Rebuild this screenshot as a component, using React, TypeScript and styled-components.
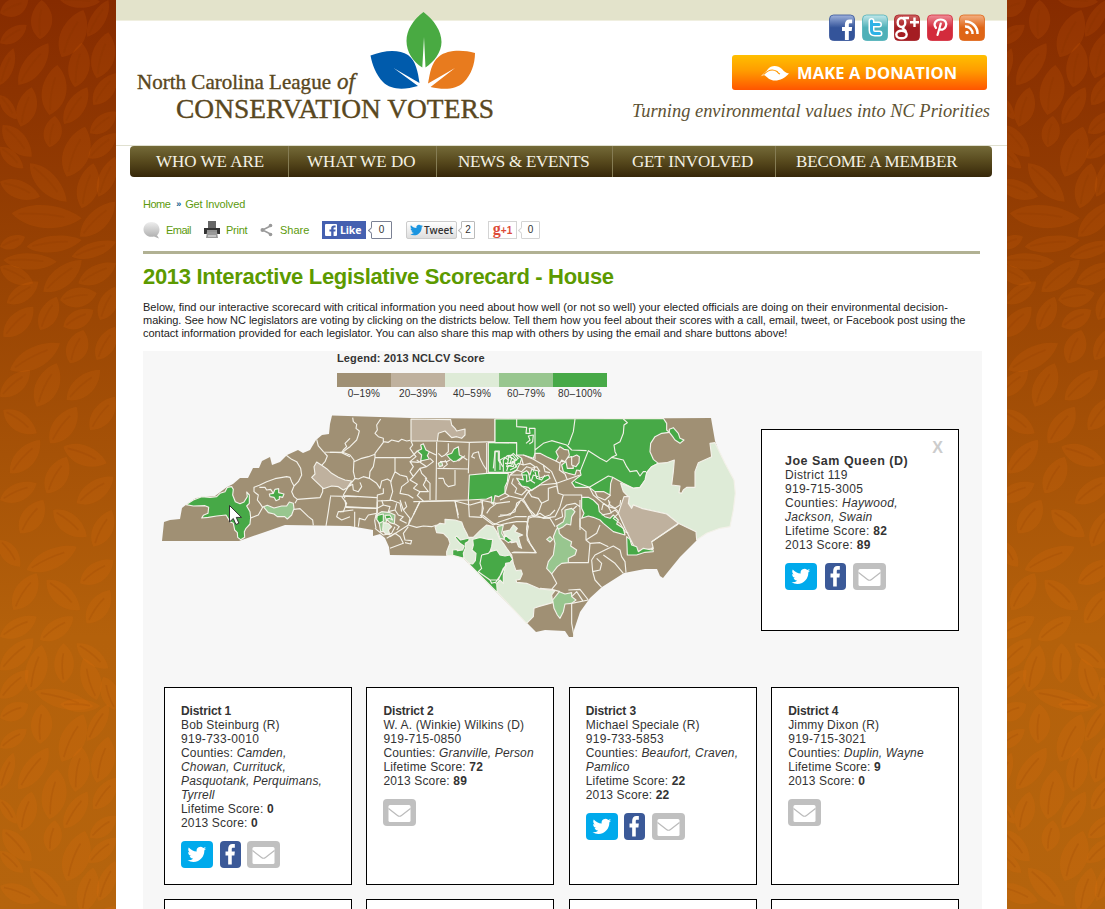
import React from 'react';
import styled, { createGlobalStyle } from 'styled-components';

const Global = createGlobalStyle`
  * { box-sizing: border-box; }
  html, body { margin: 0; padding: 0; }
  body { font-family: "Liberation Sans", Arial, sans-serif; color: #333; background: #b4620c; }
  a { color: #5c9a0c; text-decoration: none; }
`;

const Page = styled.div`
  display: grid;
  grid-template-columns: 116px 891px 98px;
  height: 909px;
  overflow: hidden;
`;
const Side = styled.svg`
  display: block;
  height: 909px;
  width: 100%;
`;
const Main = styled.main`
  background: #fff;
  min-width: 0;
`;
const Header = styled.header`
  height: 146px;
  display: flex;
  justify-content: space-between;
  padding: 0 15px 0 14px;
  border-bottom: 1px solid #e0e0d0;
  background: linear-gradient(#e3e3cb 20px, #f0efe0 20px, #f0efe0 21px, #fff 21px);
`;
const Brand = styled.svg`
  display: block;
`;
const HeaderRight = styled.div`
  display: flex;
  flex-direction: column;
  align-items: flex-end;
  width: 380px;
`;
const Socials = styled.div`
  display: flex;
  gap: 6.5px;
  padding: 14px 7px 0 0;
`;
const SocialBadge = styled.svg`
  display: block;
  width: 26px;
  height: 27px;
`;
const Donate = styled.a`
  width: 255px;
  height: 35px;
  margin: 14px 5px 0 0;
  border-radius: 3px;
  background: linear-gradient(#ffbf00, #ff9c00 45%, #ff5500);
  display: flex;
  align-items: center;
  padding-left: 28px;
  gap: 7px;
  color: #fff;
  font: bold 16.5px/35px "Open Sans", sans-serif;
  letter-spacing: 0.1px;
  white-space: nowrap;
`;
const Tagline = styled.svg`
  display: block;
  margin-top: 4px;
`;
const Nav = styled.nav`
  display: grid;
  grid-template-columns: 158px 148px 176px 163px 217px;
  width: 862px;
  height: 31px;
  margin-left: 14px;
  border-radius: 4px;
  background: linear-gradient(#746a38, #57491d 50%, #362709);
  overflow: hidden;
`;
const NavItem = styled.a<{ $pad: number; $track: number }>`
  padding-left: ${(p) => p.$pad}px;
  color: #f4f1e4;
  font: 17px/31px "Liberation Serif", serif;
  letter-spacing: ${(p) => p.$track}px;
  white-space: nowrap;
  & + & { border-left: 1px solid #857c54; }
`;
const Body = styled.section`
  padding: 20px 24px 0 27px;
`;
const Crumbs = styled.div`
  display: flex;
  gap: 4px;
  height: 14px;
  font-size: 11px;
  line-height: 14px;
  letter-spacing: -0.15px;
  a:first-child { letter-spacing: -0.5px; margin-right: 2px; }
  b { color: #0c5c8e; font-size: 9px; line-height: 15px; }
`;
const ShareBar = styled.div`
  display: flex;
  align-items: center;
  height: 22px;
  margin-top: 8px;
  font-size: 11px;
`;
const ShareLink = styled.a<{ $w: number; $track: number }>`
  display: flex;
  align-items: center;
  gap: 5px;
  width: ${(p) => p.$w}px;
  letter-spacing: ${(p) => p.$track}px;
  white-space: nowrap;
`;
const Like = styled.span`
  display: flex;
  align-items: center;
  gap: 3px;
  width: 44px;
  height: 18px;
  padding-left: 3px;
  background: #4560b0;
  color: #fff;
  font: bold 10.5px "Open Sans", sans-serif;
  letter-spacing: -0.15px;
`;
const Tweet = styled.span`
  display: flex;
  align-items: center;
  gap: 1px;
  width: 51px;
  height: 18px;
  margin-left: 14px;
  padding-left: 3px;
  border: 1px solid #ccc;
  border-radius: 2px;
  background: linear-gradient(#fff, #dedede);
  color: #333;
  font: 600 10px "Open Sans", sans-serif;
  letter-spacing: -0.05px;
`;
const Plus = styled.span`
  width: 29px;
  height: 18px;
  margin-left: 13px;
  border: 1px solid #d4d4d4;
  color: #dd4b39;
  text-align: center;
  font: bold 10px/16px "Liberation Sans", sans-serif;
  b { font: bold 16px/14px "Liberation Serif", serif; }
`;
const Count = styled.span<{ $w: number; $c: string; $gap: number }>`
  position: relative;
  width: ${(p) => p.$w}px;
  height: 18px;
  margin-left: ${(p) => p.$gap}px;
  border: 1px solid ${(p) => p.$c};
  border-radius: 1px;
  font-size: 10px;
  line-height: 16px;
  text-align: center;
  &::before {
    content: "";
    position: absolute;
    left: -3px;
    top: 6px;
    width: 4px;
    height: 4px;
    background: #fff;
    border-left: 1px solid ${(p) => p.$c};
    border-bottom: 1px solid ${(p) => p.$c};
    transform: rotate(45deg);
  }
`;
const Rule = styled.div`
  width: 837px;
  height: 3px;
  margin-top: 10px;
  background: #b1b193;
`;
const Title = styled.h1`
  margin: 10px 0 0;
  font-size: 22px;
  line-height: 26px;
  letter-spacing: -0.32px;
  color: #5c9a00;
  white-space: nowrap;
`;
const Intro = styled.p`
  margin: 11px 0 0;
  font-size: 11px;
  line-height: 13px;
  color: #222;
  white-space: nowrap;
`;
const Line = styled.span<{ $track: number }>`
  display: block;
  letter-spacing: ${(p) => p.$track}px;
`;
const Panel = styled.div`
  width: 839px;
  margin-top: 11px;
  background: #f7f7f7;
  padding-top: 1px;
`;
const Legend = styled.div`
  width: 270px;
  margin-left: 194px;
`;
const LegendTitle = styled.div`
  font-weight: bold;
  font-size: 11px;
  line-height: 13px;
  letter-spacing: 0.12px;
`;
const Scale = styled.div`
  display: grid;
  grid-template-columns: repeat(5, 54px);
  margin-top: 8px;
`;
const Step = styled.div<{ $c: string }>`
  border-top: 14px solid ${(p) => p.$c};
  text-align: center;
  font-size: 10px;
  line-height: 13px;
  letter-spacing: 0.25px;
`;
const MapRow = styled.div`
  display: flex;
  height: 287px;
`;
const MapSvg = styled.svg`
  display: block;
  flex: none;
`;
const Popup = styled.aside`
  position: relative;
  width: 198px;
  height: 202px;
  margin: 29px 0 0 18px;
  padding: 24px 23px 0;
  border: 1px solid #000;
  background: #fff;
  font-size: 12px;
  line-height: 14px;
  letter-spacing: 0.3px;
`;
const PopupName = styled.div`
  font-weight: bold;
  font-size: 12.5px;
  letter-spacing: 0.5px;
`;
const Close = styled.button`
  position: absolute;
  top: 9px;
  right: 15px;
  padding: 0;
  border: 0;
  background: none;
  color: #ccc;
  font: bold 16px/18px "Liberation Sans", sans-serif;
`;
const Cards = styled.div`
  display: grid;
  grid-template-columns: 188px 188px 188px 188px;
  column-gap: 14.4px;
  row-gap: 14px;
  margin-left: 21px;
`;
const Card = styled.article`
  height: 198px;
  padding: 16px 0 0 16px;
  border: 1px solid #000;
  background: #fff;
  font-size: 12px;
  line-height: 14px;
  letter-spacing: 0.16px;
  white-space: nowrap;
`;
const Phone = styled.div`
  letter-spacing: 0.28px;
`;
const Strong = styled.div`
  font-weight: bold;
  letter-spacing: -0.12px;
`;
const Actions = styled.div<{ $wide?: boolean }>`
  display: flex;
  gap: ${(p) => (p.$wide ? 7.5 : 6.5)}px;
  margin-top: 11px;
`;

/* Leaf wallpaper: base x, base y, tip x, tip y, width; units are a third of a pixel */
const leaves: number[][] = [
  [120,118,125,0,65],[185,172,250,30,75],[0,40,85,0,55],[0,130,80,75,45],[262,110,325,0,45],[180,0,300,5,40],
  [290,235,325,97,70],[225,262,245,128,65],[55,255,145,130,60],[0,255,40,145,40],[148,345,172,195,75],
  [192,372,262,262,55],[62,380,95,262,60],[280,315,348,220,55],[0,285,50,358,35],[148,442,165,348,55],
  [8,375,95,470,60],[270,400,348,335,50],[200,530,255,380,80],[265,475,348,400,50],[0,440,70,505,40],
  [90,490,200,605,60],[245,625,280,490,65],[295,590,345,470,50],[0,545,120,590,55],[35,640,245,655,70],
  [240,710,345,605,60],[80,740,245,720,50],[10,780,170,785,50],[215,770,348,725,45],[0,740,75,710,40],
  [235,850,348,790,55],[130,875,245,780,60],[0,800,100,850,50],[20,910,115,845,50],[180,900,290,880,60],
  [300,960,345,860,55],[120,990,170,890,55],[10,1010,100,920,60],[190,980,280,930,55],[210,1090,250,990,65],
  [290,1080,345,980,55],[30,1110,180,1030,65],[0,1190,90,1110,55],[110,1220,170,1090,70],[200,1200,300,1110,60],
  [270,1290,345,1190,60],[10,1230,110,1300,55],[150,1330,230,1220,65],[30,1420,120,1320,60],[190,1340,320,1390,60],
  [140,1480,200,1370,65],[0,1500,110,1450,55],[230,1510,340,1430,60],[60,1600,130,1500,65],[160,1530,260,1610,60],
  [280,1640,335,1530,60],[0,1620,60,1700,50],[80,1710,230,1640,60],[240,1750,340,1680,60],[40,1830,110,1720,65],
  [140,1740,240,1830,60],[260,1870,330,1770,60],[0,1910,110,1850,55],[120,1920,220,1850,55],
  [90,2075,125,1935,65],[0,2010,100,1915,60],[190,2050,190,1930,60],[230,1930,325,2005,50],[290,2100,250,1975,60],
  [105,2075,280,2120,55],[0,2095,85,2010,55],[345,2130,310,2030,55],
];
const TILE = 2113;

const leafPath = ([x1, y1, x2, y2, w]: number[]) => {
  const dx = x2 - x1, dy = y2 - y1, len = Math.hypot(dx, dy) || 1;
  const nx = (-dy / len) * w * 0.74, ny = (dx / len) * w * 0.74;
  const p = (t: number, s: number) => `${x1 + dx * t + nx * s},${y1 + dy * t + ny * s}`;
  return `M${x1},${y1} C${p(0.25, 1)} ${p(0.75, 0.9)} ${x2},${y2} C${p(0.8, -0.6)} ${p(0.3, -1)} ${x1},${y1}Z`;
};
const veinPath = ([x1, y1, x2, y2, w]: number[]) => {
  const dx = x2 - x1, dy = y2 - y1, len = Math.hypot(dx, dy) || 1;
  const nx = (-dy / len) * w * 0.12, ny = (dx / len) * w * 0.12;
  return `M${x1 + dx * 0.1},${y1 + dy * 0.1} Q${x1 + dx * 0.45 - nx},${y1 + dy * 0.45 - ny} ${x1 + dx * 0.75},${y1 + dy * 0.75}`;
};

const Foliage = ({ id, width, shift }: { id: string; width: number; shift: number }) => (
  <Side viewBox={`0 0 ${width} 909`} preserveAspectRatio="none">
    <defs>
      <linearGradient id={id} x1="0" y1="0" x2="0" y2="1">
        <stop offset="0" stopColor="#862b00" />
        <stop offset=".3" stopColor="#984303" />
        <stop offset=".7" stopColor="#b4610b" />
        <stop offset="1" stopColor="#b5640d" />
      </linearGradient>
    </defs>
    <rect width={width} height="909" fill={`url(#${id})`} />
    {[0, TILE].map((dy) => (
      <g key={dy} transform={`translate(${shift} 0) scale(.33333) translate(0 ${dy})`}>
        {leaves.map((l, i) => (
          <g key={i}>
            <path d={leafPath(l)} fill="#ff7a14" fillOpacity=".115" />
            <path d={veinPath(l)} fill="none" stroke="#7a3000" strokeOpacity=".12" strokeWidth="5" />
          </g>
        ))}
      </g>
    ))}
  </Side>
);

const BROWN = '#a09074', TAN = '#bfb19e', PALE = '#deebd7', MID = '#98c68f', GREEN = '#47a947';

type Layer = { at: [number, number]; fills: [string, string][]; lines: string };

/* Each layer is drawn at three units to the pixel from its own origin */
const layers: Layer[] = [
  {
    at: [150, 400],
    fills: [
      [GREEN, '108,314 130,300 155,290 180,292 200,290 210,280 225,275 232,262 245,260 250,268 248,285 256,305 270,311 282,306 292,290 290,276 298,285 298,310 290,318 300,335 302,352 300,372 288,385 283,395 284,412 272,419 263,412 262,398 254,390 250,370 240,365 228,345 200,348 175,352 155,354 160,346 174,340 176,322 165,317 130,318'],
      [GREEN, '358,282 370,280 375,268 386,266 386,278 402,282 398,292 388,290 388,298 378,302 372,292 360,290'],
      [MID, '340,320 352,316 372,324 395,318 410,318 418,306 430,310 432,326 425,345 412,357 404,350 382,350 372,342 355,338'],
      [TAN, '500,186 515,196 530,206 545,220 565,232 585,240 605,243 592,263 580,270 565,260 545,258 520,266 510,256 495,242 485,232 495,222 492,200'],
    ],
    lines: 'M500,118L505,138 520,155 532,168 525,185 515,196M520,156L575,158 600,170M600,115L585,130 590,140 580,150 575,158M408,165L425,178 440,185 452,205 455,225 445,245 432,258 425,245 420,232 410,230 375,236 350,245 328,256 312,262 312,275 325,285 322,300 330,310 338,322 325,345 300,355M432,258L425,275 432,290 442,298 435,310M442,298L470,296 510,293 518,275 518,262M432,328L450,326 475,350 488,360 490,376M540,288L620,290M542,288L535,335 528,378M328,262L345,262 350,270 362,268 370,280M575,290L590,310 580,335 565,335 560,350 575,360 600,350',
  },
  {
    at: [330, 345],
    fills: [
      [TAN, '243,222 362,224 365,240 375,250 380,258 405,252 405,270 395,280 380,275 365,278 345,258 325,265 322,288 243,288'],
      [GREEN, '262,318 275,312 272,300 280,296 288,315 298,320 292,332 298,342 285,345 272,348 275,330'],
      [GREEN, '365,325 372,312 385,305 388,330 398,335 380,348 370,350 360,342 350,330'],
      [MID, '325,355 335,350 338,362 328,365'],
      [GREEN, '475,292 560,294 560,330 575,340 570,355 560,375 545,382 475,382'],
      [GREEN, '418,390 470,385 535,385 532,410 525,425 525,445 505,455 495,452 490,478 485,475 485,455 470,462 415,465'],
    ],
    lines: 'M68,218L70,230 80,238 78,250 88,258 85,270 80,285 60,305 50,312 38,322 0,322M152,222L140,240 142,255 135,265 145,275 160,280 160,292 135,325 135,338M160,290L175,292 185,285 205,290 215,283 230,288 240,286M243,288L248,300 240,310 250,325M322,288L418,292M38,322L60,330 72,345 70,380 75,400M72,350L95,340 115,335 135,328M135,338L240,338 250,330 262,318M135,338L130,365 120,380 118,400 100,395 85,402 75,400 55,425 40,450 45,460M195,338L195,380 210,390 230,395 235,410 215,425 210,445 235,450 250,460M195,380L182,410 188,440 180,465M118,400L140,415 150,430 155,408 172,402 185,410M40,452L140,458M45,485L140,490M140,510L142,450 160,445 160,430M320,290L318,465M418,292L415,385M322,370L415,372M325,400L340,400 345,415 355,425 375,420 375,375M250,470L415,465M270,468L250,510M375,468L385,510M495,222L495,290 418,292M470,294L470,385M430,325L445,320 450,340 460,360 470,375M430,325L425,335 435,340M300,340L310,350 290,365 270,370 275,385 290,400 280,420 295,440 270,440 250,430M240,350L265,352 275,348M298,320L318,330M355,295L355,320 345,330M330,350L350,350 360,345M385,348L405,332M455,510L460,490 455,470M495,378L495,318 508,318 508,345 518,365M520,380L520,345 532,332 545,340 540,355 555,350 550,365 535,362 530,378M532,332L548,330 560,345 545,350M142,468L185,466 210,475 215,500M250,325L258,335 240,350 250,365 240,380 250,395 270,370M260,345L290,365M285,400L300,415 300,465M375,468L420,480 455,470M250,395L240,405 262,418 250,430M270,440L262,452 280,468M55,425L68,418 70,435 85,440 95,425 90,412M345,330L335,335 325,325M345,345L352,358 340,368M398,335L412,345',
  },
  {
    at: [340, 500],
    fills: [
      [PALE, '285,80 300,70 315,72 315,58 345,60 365,66 372,85 380,100 385,112 400,112 420,92 440,75 460,80 470,95 478,115 490,130 500,145 515,165 520,190 528,212 543,210 547,222 540,238 528,240 530,247 560,250 600,267 630,270 645,272 635,285 638,308 595,320 582,325 580,350 560,370 475,280 365,168 320,166 320,155 330,130 325,115 310,100 290,98'],
      [GREEN, '338,166 338,150 352,148 352,152 368,150 372,138 360,130 345,112 350,108 362,120 388,114 386,124 376,130 376,145 370,160 372,175'],
      [GREEN, '472,278 385,190 398,192 406,182 408,160 396,150 400,135 398,118 420,112 445,118 458,118 455,140 450,155 470,150 480,165 495,168 510,165 518,178 510,188 497,190 495,205 490,225 490,250 480,240 470,250'],
      [MID, '108,45 125,35 150,38 165,45 163,72 150,68 140,58 132,95 122,95 118,72'],
      [GREEN, '112,46 130,42 130,64 118,70 110,58'],
      [GREEN, '135,46 150,45 158,60 148,55 138,58'],
      [PALE, '130,68 145,70 155,80 145,90 150,105 135,100 128,90'],
      [MID, '472,80 490,75 485,100 495,118 480,115 475,100'],
      [PALE, '490,95 510,90 520,75 532,85 525,95 548,105 535,110 540,130 545,145 536,140 530,125 515,128 495,115'],
      [GREEN, '496,105 508,116 518,120 505,128 492,118'],
    ],
    lines: 'M15,0L18,22 112,25M44,35L44,82M0,35L40,30M55,80L58,55 75,60 85,45 110,40M180,0L190,30 210,55 205,75 190,85M240,5L205,75 230,82 250,78 275,80 290,75M190,85L150,110M140,115L165,100 180,110 190,130 150,145M205,80L190,100 195,120 215,122 212,132 195,128M240,5L345,2 355,55M385,0L388,50 425,52 428,0M428,45L460,70M475,50L500,45 525,35 530,10 545,0M460,70L480,75 500,70 530,65 560,65 565,80 560,105 570,130 588,158 520,156M425,165L420,190 425,205 415,215 450,240 475,240 490,205 500,195M425,165L445,160 455,150M465,250L485,220 495,200M450,240L455,250 470,245M112,5L112,40M112,25L130,15 150,20 145,35 165,30 175,45 190,50 180,60 200,70M130,15L125,0M165,30L170,10M105,85L130,105 155,100 165,80M165,72L178,80 170,90M108,45L104,62 108,85M190,30L200,20 195,5',
  },
  {
    at: [480, 400],
    fills: [
      [GREEN, '45,57 550,55 560,70 560,90 568,97 545,100 525,110 512,130 510,155 520,178 535,190 515,200 500,218 498,238 480,262 460,265 430,250 398,232 392,250 390,285 372,275 345,275 328,262 285,262 275,248 290,235 303,225 300,212 290,210 285,225 265,220 250,215 245,195 258,185 262,205 280,205 275,170 265,172 250,185 228,183 200,170 180,160 165,160 160,175 130,165 110,165 110,128 45,128'],
      [BROWN, '228,183 235,170 228,155 240,140 252,148 265,150 268,165 255,185 245,180 240,190'],
      [BROWN, '275,172 290,165 298,170 297,188 288,200 275,195'],
      [GREEN, '110,235 130,240 125,220 140,212 150,225 155,208 175,213 178,235 205,225 210,235 185,250 155,272 145,262 125,258'],
      [PALE, '705,128 690,130 695,170 655,188 645,215 645,262 620,262 610,270 605,280 597,278 600,258 575,255 580,215 583,180 560,188 535,190 515,200 500,218 495,240 480,262 460,265 422,250 430,275 445,290 445,310 455,325 460,315 485,325 560,342 595,370 648,395 650,420 680,400 720,385 750,380 760,330 766,280 762,240 735,190'],
      [TAN, '432,290 448,290 445,310 455,325 460,315 485,325 560,342 595,370 515,425 520,445 495,450 470,455 460,435 445,405 435,385 415,340 425,310'],
      [GREEN, '568,88 580,83 595,100 600,115 612,120 600,130 585,120 578,110 568,97'],
      [GREEN, '305,292 325,292 340,300 355,315 358,335 375,350 390,355 400,345 415,360 410,372 430,385 435,405 400,395 370,370 360,360 340,352 325,348 305,355 312,340 305,325'],
    ],
    lines: 'M110,57L110,80 140,82 138,100 150,100 148,85 165,85 165,178M138,130L150,120 145,108 160,105 158,125 148,132M285,57L280,95 265,135M165,150L190,130 215,122 260,135 275,150 320,152M430,57L442,68 432,75 430,100 420,125 402,135 405,155 410,165 395,172 380,185 360,175 325,152 300,215M395,172L430,180 440,200 450,215 470,212 480,228 490,215 498,215M328,262L385,228 398,232M90,225L75,280 88,288 130,298 145,275 180,255 230,250M130,165L160,178 190,195 215,215 230,250M230,250L300,225M130,298L150,330 165,345M145,275L155,290 175,295 185,310 205,300 205,265 230,258 235,280 250,285 240,320 225,350 190,355 165,345 145,350 140,390M250,285L305,285 305,292M230,250L235,280M0,300L50,310 90,305M88,288L60,300M328,262L340,285 370,310 365,330M370,310L385,320 395,340M300,355L300,390M0,345L40,375 60,365 105,350 140,350M90,225L110,210 125,215 140,200 155,205 170,200 180,215M120,225L140,225 140,245 155,240 160,225 175,230M115,250L135,265 150,275M145,215L150,240 165,250M105,200L115,190 130,195 125,175M90,225L120,225M60,210L60,180 75,172 85,180 80,200 95,195 105,180 90,170 100,160 115,175 100,185 110,200 90,210M40,205L45,155 55,155 55,180 60,190M100,235L95,250 110,265 105,278 125,285 140,270M130,195L150,190 165,200 160,215M165,215L170,235 185,240 195,225M75,190L95,190M85,165L85,180M190,195L195,215 210,218M240,190L238,210 255,222 262,240M285,245L310,255 328,262M345,275L352,290 375,300 392,285M385,320L405,325 415,335M20,340L30,325 50,310M170,345L178,330 185,310M265,360L260,345 272,335 290,318',
  },
  {
    at: [500, 500],
    fills: [
      [GREEN, '380,110 390,118 395,135 410,140 415,155 430,145 455,150 457,142 460,155 435,157 410,165 382,165'],
      [MID, '168,90 175,80 178,100 190,112 215,125 212,138 230,150 225,165 205,175 205,188 185,190 172,200 155,222 140,205 145,185 160,165 165,130 160,110'],
      [MID, '195,30 215,25 225,35 215,50 212,75 200,72 190,80 175,88 170,78 190,65 195,50'],
      [MID, '178,275 195,282 215,278 215,290 228,300 215,310 195,312 190,335 180,355 172,345 162,325 158,300'],
      [MID, '140,118 150,110 158,118 150,126'],
    ],
    lines: 'M80,85L85,55 100,50 150,55 165,80M80,85L82,120 108,158 35,158M100,50L75,10 65,0M0,45L30,45 50,20 60,5M240,0L240,80 258,95 258,120 270,130 265,188 205,188M258,120L290,100 300,75M270,130L300,128 325,140M275,180L285,165 315,150 340,138 360,150 365,170 375,185 378,218M275,180L278,215 300,210 305,190 290,175M310,165L345,190 370,220M278,215L285,240 305,262M155,222L170,250 155,268 120,265M155,268L180,275M205,270L240,268 265,300M215,290L230,275 250,305M215,310L265,300M215,310L215,370 222,408M310,10L325,20 330,5M305,45L330,40 345,30 355,40 340,55 360,70 375,95 385,100M240,20L225,10 200,15 185,30 188,50 165,60M455,125L535,72M100,50L120,40 135,50 150,45 165,30M325,0L330,15 345,25 360,15 362,0',
  },
];

const NcMap = () => (
  <MapSvg width="600" height="287" viewBox="143 400 600 287">
    <path
      fill={BROWN}
      d="M162,541L164,522 170,520 180,519 182,508 187,504 196,498 215,496 227,487 233,484 240,478 248,478 253,468 259,468 262,461 270,457 272,465 280,462 287,455 298,450 303,453 310,450 316,440 322,435 329,434 330,424 332,415.5 411,418 548,419 711,418 715,441 730,480 697,540 680,557 667,573 663,578 660,576 657,569 645,569 624,573 602,587 590,598 580,612 574,630 573,637 569,637 565,631 545,630 536,632 461,556 390,555 389,547 385,538 380,534 373,536 373,530 350,526 285,525 265,532 239,541Z"
    />
    {layers.map((l, i) => (
      <g key={i} transform={`translate(${l.at[0]} ${l.at[1]}) scale(.33333)`} stroke="#f3f1e9" strokeWidth="3.4" strokeLinejoin="round">
        {l.fills.map(([c, pts], j) => (
          <polygon key={j} points={pts} fill={c} />
        ))}
        <path d={l.lines} fill="none" />
      </g>
    ))}
    <path d="M229.5,505.500V522l3.800,-3.500 2.600,6 3,-1.300 -2.600,-5.800h5.200Z" fill="#fff" stroke="#333" strokeWidth="1" />
  </MapSvg>
);

const BIRD = 'M23.950 4.570a10 10 0 0 1-2.820.770 4.960 4.960 0 0 0 2.160-2.720c-.950.550-2 .950-3.130 1.180a4.920 4.920 0 0 0-8.380 4.480C7.690 8.090 4.070 6.130 1.640 3.160a4.820 4.820 0 0 0-.670 2.480c0 1.710.870 3.210 2.190 4.090a4.900 4.900 0 0 1-2.230-.610v.060a4.920 4.920 0 0 0 3.950 4.830 5 5 0 0 1-2.210.080 4.940 4.940 0 0 0 4.600 3.420A9.870 9.870 0 0 1 0 19.540a14 14 0 0 0 7.550 2.210c9.050 0 14-7.500 14-13.980 0-.210 0-.420-.020-.630a9.940 9.940 0 0 0 2.460-2.550z';
const F = 'M6,17V9.500H3.500V6.300H6V4.200C6,1.500 7.600,0 10,0h2.300v3.200h-1.700c-1,0-1.200.500-1.200 1.200v1.900h2.900l-.400 3.200H9.400V17Z';

const Contact = ({ only, wide }: { only?: boolean; wide?: boolean }) => (
  <Actions $wide={wide}>
    {!only && (
      <svg width="32" height="27"><rect width="32" height="27" rx="4" fill="#00aaec" /><path d={BIRD} fill="#fff" transform="translate(6.500 4) scale(.78)" /></svg>
    )}
    {!only && (
      <svg width="21" height="27"><rect width="21" height="27" rx="4" fill="#3b5998" /><path d={F} fill="#fff" transform="translate(1.800 3) scale(1.060 1.200)" /></svg>
    )}
    <svg width="33" height="27">
      <rect width="33" height="27" rx="4" fill="#c0c0c0" />
      <rect x="5.500" y="6" width="22" height="17" rx="1.500" fill="#fff" />
      <path d="M5.500,9.500L14.500,16.500Q16.500,18 18.500,16.500L27.500,9.500" fill="none" stroke="#bbb" strokeWidth="1.200" />
    </svg>
  </Actions>
);

type Member = { n: number; name: string; phone: string; counties: string[]; life: number; score: number; only?: boolean };
const members: Member[] = [
  { n: 1, name: 'Bob Steinburg (R)', phone: '919-733-0010', counties: ['Camden,', 'Chowan, Currituck,', 'Pasquotank, Perquimans,', 'Tyrrell'], life: 0, score: 0 },
  { n: 2, name: 'W. A. (Winkie) Wilkins (D)', phone: '919-715-0850', counties: ['Granville, Person'], life: 72, score: 89, only: true },
  { n: 3, name: 'Michael Speciale (R)', phone: '919-733-5853', counties: ['Beaufort, Craven,', 'Pamlico'], life: 22, score: 22 },
  { n: 4, name: 'Jimmy Dixon (R)', phone: '919-715-3021', counties: ['Duplin, Wayne'], life: 9, score: 0, only: true },
];

const Details = ({ phone, counties, life, score }: Pick<Member, 'phone' | 'counties' | 'life' | 'score'>) => (
  <>
    <Phone>{phone}</Phone>
    <div>Counties: <i>{counties.map((c, i) => <React.Fragment key={c}>{i > 0 && <br />}{c}</React.Fragment>)}</i></div>
    <div>Lifetime Score: <b>{life}</b></div>
    <div>2013 Score: <b>{score}</b></div>
  </>
);

const badge = (id: string, top: string, bottom: string, art: React.ReactNode) => (
  <SocialBadge viewBox="0 0 26 27">
    <defs>
      <linearGradient id={id} x1="0" y1="0" x2="0" y2="1"><stop offset="0" stopColor={top} /><stop offset=".5" stopColor={bottom} /><stop offset="1" stopColor={bottom} /></linearGradient>
    </defs>
    <rect x=".500" y="1" width="25" height="25.500" rx="4" fill={`url(#${id})`} stroke={bottom} strokeOpacity=".8" />
    {art}
  </SocialBadge>
);

export default function App() {
  return (
    <>
      <Global />
      <Page>
        <Foliage id="skyL" width={116} shift={0} />
        <Main>
          <Header>
            <Brand width="380" height="140" viewBox="130 0 380 140">
              <path d="M423.500,12C434,20 441.500,31 441.500,42C441.500,52 434,62 425.500,67.500L424,37 422.300,67.500C413,62 406.500,52 406.500,41C406.500,30 413,20 423.500,12Z" fill="#49aa42" />
              <path d="M370.500,55.500C384,50 399,49 408,55C416,61 418,72 419.500,83L393.500,68 418,86C404,90 391,90 383,82C376,75 372,64 370.500,55.500Z" fill="#005bac" />
              <path d="M475,53C462,49.500 447,50 439,56.500C431,63 430,73 428,83.500L455,68 430.500,87C443,90 456,90 464,82C471,75 475,64 475,53Z" fill="#e87b1e" />
              <g fontFamily="Liberation Serif, serif" fill="#594720" stroke="#594720" strokeWidth=".35">
                <text x="137" y="88.500" fontSize="21.500" textLength="194" lengthAdjust="spacingAndGlyphs">North Carolina League</text>
                <text x="337" y="88.500" fontSize="23" fontStyle="italic">of</text>
                <text x="176" y="118" fontSize="27" textLength="318" lengthAdjust="spacingAndGlyphs">CONSERVATION VOTERS</text>
              </g>
            </Brand>
            <HeaderRight>
              <Socials>
                {badge('fb', '#9fb2dc', '#34549a', <path d={F} fill="#fff" transform="translate(9 5.500) scale(1.150 1.200)" />)}
                {badge('tw', '#c3e8ea', '#4fb0b8', <g fill="none" strokeLinecap="round" strokeLinejoin="round"><path d="M9.500,7V16Q9.500,19.500 13,19.500H17.500M9.500,10.500H17" stroke="#fff" strokeWidth="6" /><path d="M9.500,7V16Q9.500,19.500 13,19.500H17.500M9.500,10.500H17" stroke="#2cb2e6" strokeWidth="3" /></g>)}
                {badge('gp', '#cf6060', '#a41d22', <g fill="none" stroke="#fff" strokeWidth="2.400"><ellipse cx="7.500" cy="8.500" rx="3.800" ry="4.500" /><path d="M9,4H15M10,12.500C7,15 11,15 12,18" /><ellipse cx="7.500" cy="20.500" rx="5.200" ry="3.800" /><path d="M20.500,3.500V13M16,8.200H25" /></g>)}
                {badge('pi', '#f08d98', '#d32b3c', <path d="M9,14C5.500,9.500 9,5.500 13.800,5.500C18.500,5.500 20,9 18.800,12.500C17.500,16 13.500,16.500 12.500,14.500M13.800,9.500L10.500,21" fill="none" stroke="#fff" strokeWidth="2.200" strokeLinecap="round" />)}
                {badge('rs', '#f3b083', '#df6516', <g fill="none" stroke="#fff" strokeWidth="2.500"><circle cx="8" cy="18.500" r="1" fill="#fff" strokeWidth="1.500" /><path d="M6,12.500A7,7 0 0 1 13.500,20M6,7.500A12,12 0 0 1 18.500,20" /></g>)}
              </Socials>
              <Donate href="#">
                <svg width="30" height="16" viewBox="0 0 30 16">
                  <path d="M.500,11.500C4,8 6,7 8,4C11,0 18,0 22,4C24,6.500 26,8.300 29,8.500C25,13 20,15.500 15,15.500C10,15.500 8,13 5,10.500C3.500,10 2,10.500 .500,11.500Z" fill="#fff" />
                  <path d="M3.500,9.600C9,4 14,4.500 17,6.500C18,7.500 18.500,8.500 20,9" fill="none" stroke="#ff9800" strokeWidth="1.100" />
                </svg>
                MAKE A DONATION
              </Donate>
              <Tagline width="380" height="34" viewBox="612 94 380 34">
                <text x="632" y="117" fontFamily="Liberation Serif, serif" fontStyle="italic" fontSize="19" fill="#5d5233" textLength="358" lengthAdjust="spacingAndGlyphs">Turning environmental values into NC Priorities</text>
              </Tagline>
            </HeaderRight>
          </Header>
          <Nav>
            <NavItem href="#" $pad={26} $track={-0.02}>WHO WE ARE</NavItem>
            <NavItem href="#" $pad={18} $track={0.06}>WHAT WE DO</NavItem>
            <NavItem href="#" $pad={21} $track={-0.28}>NEWS &amp; EVENTS</NavItem>
            <NavItem href="#" $pad={19} $track={-0.18}>GET INVOLVED</NavItem>
            <NavItem href="#" $pad={20} $track={-0.13}>BECOME A MEMBER</NavItem>
          </Nav>
          <Body>
            <Crumbs><a href="#">Home</a><b>»</b><a href="#">Get Involved</a></Crumbs>
            <ShareBar>
              <ShareLink href="#" $w={60} $track={-0.5}>
                <svg width="18" height="18"><defs><linearGradient id="bub" x1="0" y1="0" x2="0" y2="1"><stop offset="0" stopColor="#eee" /><stop offset="1" stopColor="#aaa" /></linearGradient></defs><path d="M8.500,1C13,1 16.500,4 16.500,8.500C16.500,11 15.500,13 14,14.200L16,17.500 11,15.500C5,17 .500,13 .500,8.500C.500,4 4,1 8.500,1Z" fill="url(#bub)" /></svg>
                Email
              </ShareLink>
              <ShareLink href="#" $w={57} $track={-0.25}>
                <svg width="18" height="18"><path d="M5,0H13V7H5Z" fill="#666" /><path d="M1,7H17V13H1Z" fill="#333" /><path d="M4,11H14L15,17H3Z" fill="#999" /><path d="M4,10H14M5,15H13" stroke="#eee" /></svg>
                Print
              </ShareLink>
              <ShareLink href="#" $w={62} $track={0}>
                <svg width="15" height="14"><path d="M11.500,2.500L2.500,7 11.500,11.500" fill="none" stroke="#999" strokeWidth="1.500" /><g fill="#999"><circle cx="10.500" cy="2.500" r="1.800" /><circle cx="2.500" cy="7" r="2" /><circle cx="10.500" cy="11.500" r="1.800" /></g></svg>
                Share
              </ShareLink>
              <Like><svg width="12" height="12"><rect width="12" height="12" rx="1" fill="#fff" /><path d={F} fill="#4560b0" transform="translate(2 1.500) scale(.700 .620)" /></svg>Like</Like>
              <Count $w={21} $gap={5} $c="#7b8194">0</Count>
              <Tweet><svg width="13" height="12" viewBox="0 2 24 20"><path d={BIRD} fill="#1b95e0" /></svg>Tweet</Tweet>
              <Count $w={14} $gap={4} $c="#bbb">2</Count>
              <Plus><b>g</b>+1</Plus>
              <Count $w={19} $gap={4} $c="#d4d4d4">0</Count>
            </ShareBar>
            <Rule />
            <Title>2013 Interactive Legislative Scorecard - House</Title>
            <Intro>
              <Line $track={0.024}>Below, find our interactive scorecard with critical information you need about how well (or not so well) your elected officials are doing on their environmental decision-</Line>
              <Line $track={-0.023}>making. See how NC legislators are voting by clicking on the districts below. Tell them how you feel about their scores with a call, email, tweet, or Facebook post using the</Line>
              <Line $track={-0.015}>contact information provided for each legislator. You can also share this map with others by using the email and share buttons above!</Line>
            </Intro>
            <Panel>
              <Legend>
                <LegendTitle>Legend: 2013 NCLCV Score</LegendTitle>
                <Scale>
                  <Step $c={BROWN}>0–19%</Step>
                  <Step $c={TAN}>20–39%</Step>
                  <Step $c={PALE}>40–59%</Step>
                  <Step $c={MID}>60–79%</Step>
                  <Step $c={GREEN}>80–100%</Step>
                </Scale>
              </Legend>
              <MapRow>
                <NcMap />
                <Popup>
                  <Close>X</Close>
                  <PopupName>Joe Sam Queen (D)</PopupName>
                  <div>District 119</div>
                  <Details phone="919-715-3005" counties={['Haywood,', 'Jackson, Swain']} life={82} score={89} />
                  <Contact wide />
                </Popup>
              </MapRow>
              <Cards>
                {members.map((m) => (
                  <Card key={m.n}>
                    <Strong>District {m.n}</Strong>
                    <div>{m.name}</div>
                    <Details {...m} />
                    <Contact only={m.only} />
                  </Card>
                ))}
                <Card /><Card /><Card /><Card />
              </Cards>
            </Panel>
          </Body>
        </Main>
        <Foliage id="skyR" width={98} shift={-9} />
      </Page>
    </>
  );
}
